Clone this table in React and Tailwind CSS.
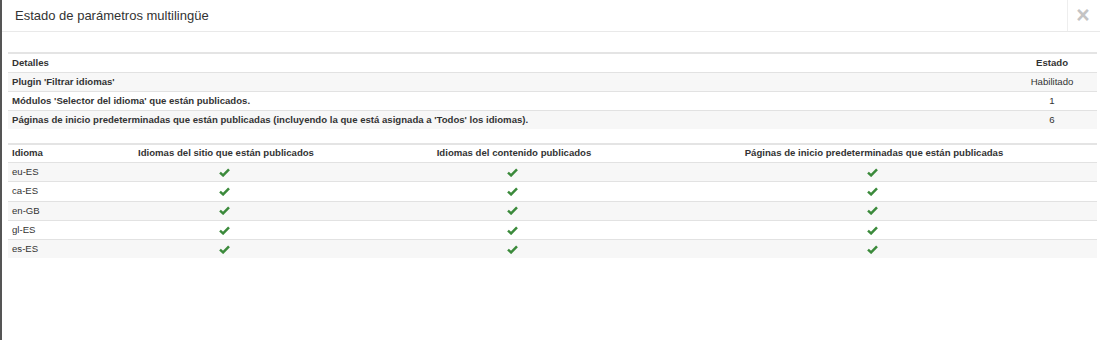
import React from "react";

const Check = () => (
  <svg width="11" height="9" viewBox="0 0 11 9" className="block">
    <path d="M1 4.6 L4.1 7.4 L10 1.4" stroke="#3b8a3b" strokeWidth="2.5" fill="none" />
  </svg>
);

const details = [
  ["Plugin 'Filtrar idiomas'", "Habilitado"],
  ["Módulos 'Selector del idioma' que están publicados.", "1"],
  [
    "Páginas de inicio predeterminadas que están publicadas (incluyendo la que está asignada a 'Todos' los idiomas).",
    "6",
  ],
];

const languages = ["eu-ES", "ca-ES", "en-GB", "gl-ES", "es-ES"];

export default function App() {
  return (
    <div
      className="h-[340px] w-[1100px] bg-white border-l-2 border-[#555] text-[#333] overflow-hidden"
      style={{ fontFamily: '"Liberation Sans", Arial, sans-serif' }}
    >
      {/* modal header */}
      <div className="flex h-[32px] border-b border-[#e9e9e9]">
        <h3 className="flex-1 pl-[13px] flex items-center text-[13px] leading-none font-normal">
          Estado de parámetros multilingüe
        </h3>
        <button className="w-[33px] border-l border-[#eeeeee] flex items-center justify-center pr-[2px] text-[23px] font-bold leading-none text-[#c4c4c4]">
          ×
        </button>
      </div>

      {/* body */}
      <div className="pl-[6px] pr-[3px] pt-[20px] text-[9.6px]">
        {/* status table */}
        <div className="border-t-2 border-[#e4e4e4]">
          <div className="grid grid-cols-[1fr_90px] h-[18px] items-center font-bold">
            <div className="px-[4px]">Detalles</div>
            <div className="text-center">Estado</div>
          </div>
          {details.map(([label, value], i) => (
            <div
              key={label}
              className={`grid grid-cols-[1fr_90px] h-[19px] items-center border-t border-[#e2e2e2] ${
                i % 2 === 0 ? "bg-[#f7f7f7]" : "bg-white"
              }`}
            >
              <div className="px-[4px] font-bold">{label}</div>
              <div className="text-center">{value}</div>
            </div>
          ))}
        </div>

        {/* languages table */}
        <div className="mt-[14px] border-t-2 border-[#e4e4e4]">
          <div className="grid grid-cols-[67px_302px_274px_1fr] h-[17px] items-center font-bold">
            <div className="px-[4px]">Idioma</div>
            <div className="text-center">Idiomas del sitio que están publicados</div>
            <div className="text-center">Idiomas del contenido publicados</div>
            <div className="text-center">Páginas de inicio predeterminadas que están publicadas</div>
          </div>
          {languages.map((lang, i) => (
            <div
              key={lang}
              className={`grid grid-cols-[67px_302px_274px_1fr] h-[19.3px] items-center border-t border-[#e2e2e2] ${
                i % 2 === 0 ? "bg-[#f7f7f7]" : "bg-white"
              }`}
            >
              <div className="px-[4px]">{lang}</div>
              <div className="flex justify-center pr-[3px]">
                <Check />
              </div>
              <div className="flex justify-center pr-[3px]">
                <Check />
              </div>
              <div className="flex justify-center pr-[3px]">
                <Check />
              </div>
            </div>
          ))}
        </div>
      </div>
    </div>
  );
}
